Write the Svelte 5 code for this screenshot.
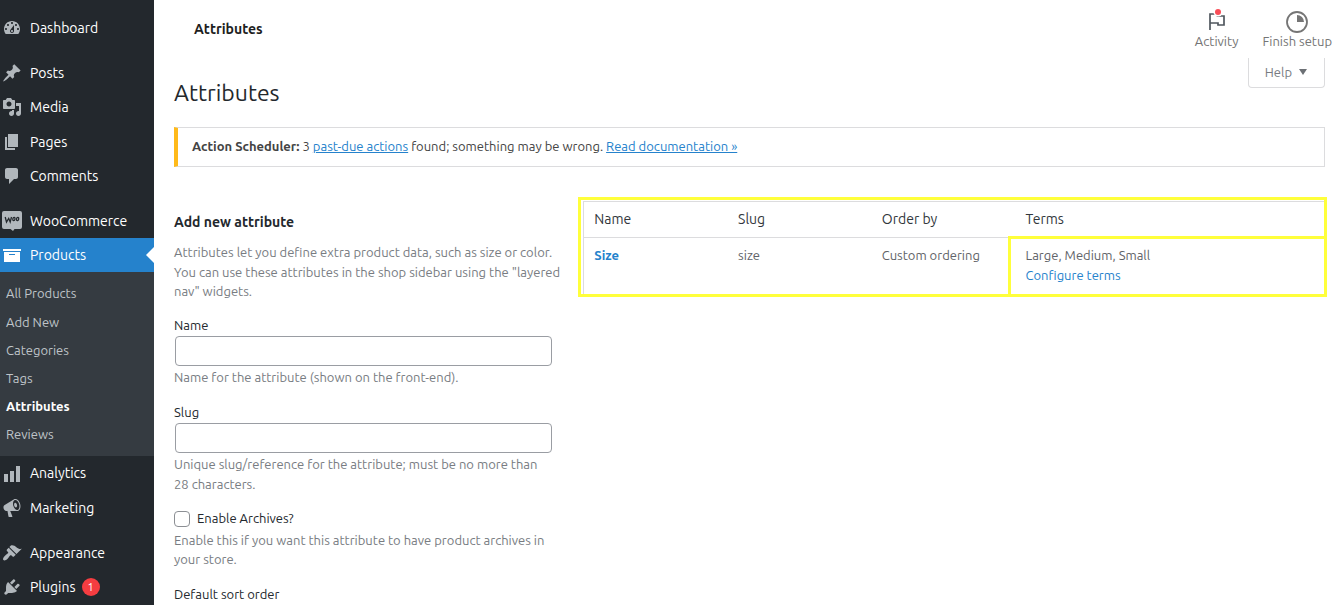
<script>
  const icons = {
    dashboard:
      'M3.76 16h12.48c1.1-1.37 1.76-3.11 1.76-5 0-4.42-3.58-8-8-8s-8 3.58-8 8c0 1.89.66 3.63 1.76 5zM10 4c.55 0 1 .45 1 1s-.45 1-1 1-1-.45-1-1 .45-1 1-1zM6 6c.55 0 1 .45 1 1s-.45 1-1 1-1-.45-1-1 .45-1 1-1zm8 0c.55 0 1 .45 1 1s-.45 1-1 1-1-.45-1-1 .45-1 1-1zm-5.37 5.55L12 7v6c0 1.1-.9 2-2 2s-2-.9-2-2c0-.57.24-1.08.63-1.45zM4 10c.55 0 1 .45 1 1s-.45 1-1 1-1-.45-1-1 .45-1 1-1zm12 0c.55 0 1 .45 1 1s-.45 1-1 1-1-.45-1-1 .45-1 1-1zm-5 3c0-.55-.45-1-1-1s-1 .45-1 1 .45 1 1 1 1-.45 1-1z',
    posts:
      'M10.44 3.02l1.82-1.82 6.36 6.35-1.83 1.82c-1.05-.68-2.48-.57-3.41.36l-.75.75c-.92.93-1.04 2.35-.35 3.41l-1.83 1.82-2.41-2.41-2.8 2.79c-.42.42-3.38 2.71-3.8 2.29s1.86-3.39 2.28-3.81l2.79-2.79L4.1 9.36l1.83-1.82c1.05.69 2.48.57 3.4-.36l.75-.75c.93-.92 1.05-2.35.36-3.41z',
    media:
      'M13 11V4c0-.55-.45-1-1-1h-1.67L9 1H5L3.67 3H2c-.55 0-1 .45-1 1v7c0 .55.45 1 1 1h10c.55 0 1-.45 1-1zM7 4.5c1.38 0 2.5 1.12 2.5 2.5S8.38 9.5 7 9.5 4.5 8.38 4.5 7 5.62 4.5 7 4.5zM14 6h5v10.5c0 1.38-1.12 2.5-2.5 2.5S14 17.88 14 16.5s1.12-2.5 2.5-2.5c.17 0 .34.02.5.05V9h-3V6zm-4 8.05V13h2v3.5c0 1.38-1.12 2.5-2.5 2.5S7 17.88 7 16.5 8.12 14 9.5 14c.17 0 .34.02.5.05z',
    pages: 'M6 15V2h10v13H6zm-1 1h8v2H3V5h2v11z',
    comments:
      'M5 2h9c1.1 0 2 .9 2 2v7c0 1.1-.9 2-2 2h-2l-5 5v-5H5c-1.1 0-2-.9-2-2V4c0-1.1.9-2 2-2z',
    products: 'M19 4v2H1V4h18zM2 7h16v10H2V7zm11 3V9H7v1h6z',
    analytics: 'M18 18V2h-4v16h4zm-6 0V7H8v11h4zm-6 0v-8H2v8h4z',
    marketing:
      'M18.15 5.94c.46 1.62.38 3.22-.02 4.48-.42 1.28-1.26 2.18-2.3 2.48-.16.06-.26.06-.4.06-.06.02-.12.02-.18.02-.06.02-.14.02-.22.02h-6.8l2.22 5.5c.02.14-.06.26-.14.34-.08.1-.24.16-.34.16H6.95c-.1 0-.26-.06-.34-.16-.08-.08-.16-.2-.14-.34l-1-5.5H4.25l-.02-.02c-.5.06-1.08-.18-1.54-.62s-.88-1.08-1.06-1.88c-.24-.8-.2-1.56-.02-2.2.18-.62.58-1.08 1.06-1.3l.02-.02 9-5.4c.1-.06.18-.1.24-.16.06-.04.14-.08.24-.12.16-.08.28-.12.5-.18 1.04-.3 2.24.1 3.22.98s1.84 2.24 2.26 3.86zm-2.58 5.98h-.02c.4-.1.74-.34 1.04-.7.58-.7.86-1.76.86-3.04 0-.64-.1-1.3-.28-1.98-.34-1.36-1.02-2.5-1.78-3.24s-1.68-1.1-2.46-.88c-.82.22-1.4.96-1.7 2-.32 1.04-.28 2.36.06 3.72.38 1.36 1 2.5 1.8 3.24.78.74 1.62 1.1 2.48.88zm-2.54-7.08c.22-.04.42-.02.62.04.38.16.76.48 1.02 1s.42 1.2.42 1.78c0 .3-.04.56-.12.8-.18.48-.44.84-.86.94-.34.1-.8-.06-1.14-.4s-.64-.86-.78-1.5c-.18-.62-.12-1.24.02-1.72s.48-.84.82-.94z',
    appearance:
      'M14.48 11.06L7.41 3.99l1.5-1.5c.5-.56 2.3-.47 3.51.32 1.21.8 1.43 1.28 2.91 2.1 1.18.64 2.45 1.26 4.45.85zm-.71.71L6.7 4.7 4.93 6.47c-.39.39-.39 1.02 0 1.41l1.06 1.06c.39.39.39 1.03 0 1.42-.6.6-1.43 1.11-2.21 1.69-.35.26-.7.53-1.01.84C1.43 14.23.4 16.08 1.4 17.07c.99 1 2.84-.03 4.18-1.36.31-.31.58-.66.85-1.02.57-.78 1.08-1.61 1.69-2.21.39-.39 1.02-.39 1.41 0l1.06 1.06c.39.39 1.02.39 1.41 0z',
    plugins:
      'M13.11 4.36L9.87 7.6 8 5.73l3.24-3.24c.35-.34 1.05-.2 1.56.32.52.51.66 1.21.31 1.55zm-8 1.77l.91-1.12 9.01 9.01-1.19.84c-.71.71-2.63 1.16-3.82 1.16H6.14L4.9 17.26c-.59.59-1.54.59-2.12 0-.59-.58-.59-1.53 0-2.12l1.24-1.24v-3.88c0-1.13.4-3.19 1.09-3.89zm7.26 3.97l3.24-3.24c.34-.35 1.04-.21 1.55.31.52.51.66 1.21.31 1.55l-3.24 3.25z',
  };

  const groups = [
    [{ label: 'Dashboard', icon: 'dashboard' }],
    [
      { label: 'Posts', icon: 'posts' },
      { label: 'Media', icon: 'media' },
      { label: 'Pages', icon: 'pages' },
      { label: 'Comments', icon: 'comments' },
    ],
    [
      { label: 'WooCommerce', icon: 'woo' },
      {
        label: 'Products',
        icon: 'products',
        children: ['All Products', 'Add New', 'Categories', 'Tags', 'Attributes', 'Reviews'],
      },
      { label: 'Analytics', icon: 'analytics' },
      { label: 'Marketing', icon: 'marketing' },
    ],
    [
      { label: 'Appearance', icon: 'appearance' },
      { label: 'Plugins', icon: 'plugins', count: 1 },
    ],
  ];

  let name = $state('');
  let slug = $state('');
  let archives = $state(false);
</script>

<div class="layout">
  <nav class="sidebar" aria-label="Main menu">
    {#each groups as group}
      <ul class="group">
        {#each group as item}
          <li>
            <a class="item" class:current={item.children} href="#top">
              <svg class="icon" viewBox="0 0 20 20" aria-hidden="true">
                {#if item.icon === 'woo'}
                  <path d="M2 0h16q2 0 2 2v14q0 2-2 2h-5.500l-1.500 2-2.500-2H2q-2 0-2-2V2q0-2 2-2z" />
                  <g class="woo-mark">
                    <path d="M3.200 6l1.300 5 2.200-3.600L8.200 11 9.500 6" />
                    <ellipse cx="11.900" cy="8" rx="1.100" ry="1.700" transform="rotate(12 11.900 8)" />
                    <ellipse cx="15.600" cy="8" rx="1.100" ry="1.700" transform="rotate(12 15.600 8)" />
                  </g>
                {:else}
                  <path d={icons[item.icon]} />
                {/if}
              </svg>
              <span>{item.label}</span>
              {#if item.count}<span class="count">{item.count}</span>{/if}
            </a>
            {#if item.children}
              <ul class="submenu">
                {#each item.children as child}
                  <li><a href="#top" class:active={child === 'Attributes'}>{child}</a></li>
                {/each}
              </ul>
            {/if}
          </li>
        {/each}
      </ul>
    {/each}
  </nav>

  <div class="page" id="top">
    <header class="topbar">
      <div class="crumb">Attributes</div>
      <div class="tabs">
        <button type="button">
          <svg width="24" height="24" viewBox="0 0 24 24" aria-hidden="true">
            <path d="M5 21V5h7.500v2H19v9h-6v-2H5" fill="none" stroke="#50575e" stroke-width="1.700" />
            <circle cx="13" cy="3" r="4.500" fill="#fff" />
            <circle cx="13" cy="3" r="3" fill="#f94d57" />
          </svg>
          Activity
        </button>
        <button type="button">
          <svg width="24" height="24" viewBox="0 0 24 24" aria-hidden="true">
            <circle cx="12" cy="13" r="10" fill="none" stroke="#757575" stroke-width="1.800" />
            <path d="M12 13V6a7 7 0 0 1 7 7z" fill="#757575" />
          </svg>
          Finish setup
        </button>
      </div>
    </header>

    <main>
      <div class="heading">
        <h1>Attributes</h1>
        <button type="button" class="help">Help
          <svg width="10" height="8" viewBox="0 0 10 8" aria-hidden="true"><path d="M1 1h8L5 7z" /></svg>
        </button>
      </div>

      <div class="notice">
        <strong>Action Scheduler:</strong> 3 <a href="#top">past-due actions</a> found; something may be wrong. <a href="#top">Read documentation »</a>
      </div>

      <div class="columns">
        <form>
          <h2>Add new attribute</h2>
          <p class="intro">Attributes let you define extra product data, such as size or color. You can use these attributes in the shop sidebar using the "layered nav" widgets.</p>

          <div class="fields">
            <div>
              <label for="name">Name</label>
              <input id="name" type="text" bind:value={name} />
              <p>Name for the attribute (shown on the front-end).</p>
            </div>
            <div>
              <label for="slug">Slug</label>
              <input id="slug" type="text" bind:value={slug} />
              <p>Unique slug/reference for the attribute; must be no more than 28 characters.</p>
            </div>
            <div>
              <label class="check"><input type="checkbox" bind:checked={archives} />Enable Archives?</label>
              <p>Enable this if you want this attribute to have product archives in your store.</p>
            </div>
            <div class="sort">Default sort order</div>
          </div>
        </form>

        <div class="listing">
          <table>
            <thead>
              <tr><th>Name</th><th>Slug</th><th>Order by</th><th class="wide">Terms</th></tr>
            </thead>
            <tbody>
              <tr>
                <td><a class="strong" href="#top">Size</a></td>
                <td>size</td>
                <td>Custom ordering</td>
                <td class="terms">Large, Medium, Small<br /><a href="#top">Configure terms</a></td>
              </tr>
            </tbody>
          </table>
        </div>
      </div>
    </main>
  </div>
</div>

<style>
  :global(body) {
    background: #fff;
    color: #50575e;
    font: 13px/1.5 Ubuntu, 'Noto Sans', sans-serif;
  }
  .layout {
    display: flex;
    min-height: 100vh;
  }
  ul,
  p,
  h1,
  h2 {
    margin: 0;
    padding: 0;
    list-style: none;
  }
  a {
    color: #2582cc;
  }
  button {
    font: inherit;
    color: #757575;
    background: none;
    border: 0;
    padding: 0;
  }

  .sidebar {
    flex: 0 0 154px;
    height: 100vh;
    overflow: hidden;
    background: #23282d;
  }
  .group {
    margin-top: 11px;
  }
  .item {
    position: relative;
    display: flex;
    align-items: center;
    gap: 8px;
    padding: 8px 0 8px 2px;
    font-size: 14px;
    line-height: 1.3;
    color: #fff;
    text-decoration: none;
  }
  .icon {
    flex: none;
    width: 20px;
    height: 20px;
    margin: -1px 0;
    fill: #b1b7bc;
    overflow: visible;
  }
  .woo-mark {
    fill: none;
    stroke: #23282d;
    stroke-width: 1.3;
  }
  .current {
    background: #2582cc;
  }
  .current .icon {
    fill: #fff;
  }
  .current::after {
    content: '';
    position: absolute;
    right: 0;
    top: 9px;
    border: 8px solid transparent;
    border-left: 0;
    border-right-color: #fff;
  }
  .count {
    width: 18px;
    height: 18px;
    margin: 0 0 0 -2px;
    border-radius: 9px;
    background: #f53d41;
    font-size: 11px;
    line-height: 18px;
    text-align: center;
  }
  .submenu {
    padding: 7px 0 8px;
    background: #353b41;
  }
  .submenu a {
    display: block;
    padding: 5px 6px;
    font-size: 13px;
    line-height: 1.4;
    color: #bfc4c8;
    text-decoration: none;
  }
  .submenu .active {
    color: #fff;
    font-weight: 700;
  }

  .page {
    flex: 1;
    min-width: 0;
  }
  .topbar {
    display: flex;
    justify-content: space-between;
    align-items: center;
    height: 58px;
    padding-left: 40px;
  }
  .crumb {
    font-size: 14px;
    font-weight: 600;
    color: #1e1e1e;
  }
  .tabs {
    display: flex;
    gap: 24px;
    padding-right: 12px;
  }
  .tabs button {
    display: flex;
    flex-direction: column;
    align-items: center;
    line-height: 16px;
  }
  .tabs svg {
    overflow: visible;
  }

  main {
    padding: 0 19px 0 20px;
  }
  .heading {
    display: flex;
    justify-content: space-between;
    align-items: flex-start;
  }
  h1 {
    padding-top: 20px;
    font-size: 23px;
    line-height: 29px;
    font-weight: 400;
    color: #23282d;
  }
  .help {
    display: flex;
    align-items: center;
    gap: 6px;
    padding: 4px 16px 5px;
    border: 1px solid #dcdcde;
    border-top: 0;
    border-radius: 0 0 4px 4px;
    line-height: 20px;
    color: #787c82;
  }
  .help svg {
    fill: #6c7075;
  }
  .notice {
    margin-top: 20px;
    padding: 8px 14px 10px;
    border: 1px solid #dcdcde;
    border-left: 4px solid #ffba1a;
    line-height: 20px;
    color: #444;
  }
  .notice strong {
    font-weight: 600;
  }

  .columns {
    display: grid;
    grid-template-columns: 35fr 65fr;
    gap: 10px;
    margin-top: 34px;
  }
  h2 {
    margin-top: 11px;
    font-size: 14px;
    line-height: 20px;
    font-weight: 600;
    color: #23282d;
  }
  p {
    color: #787c82;
  }
  .intro {
    margin: 11px 0 14px;
  }
  .fields {
    display: grid;
    gap: 15px;
    padding-right: 22px;
  }
  label,
  .sort {
    display: block;
    color: #23282d;
  }
  input[type='text'] {
    display: block;
    box-sizing: border-box;
    width: 100%;
    height: 30px;
    margin: 1px 1px 2px;
    padding: 0 8px;
    border: 1px solid #9a9da3;
    border-radius: 4px;
  }
  .check {
    display: flex;
    align-items: center;
    gap: 7px;
    margin-bottom: 2px;
  }
  input[type='checkbox'] {
    appearance: none;
    width: 16px;
    height: 16px;
    margin: 0;
    border: 1px solid #8c8f94;
    border-radius: 4px;
    background: #fff;
  }

  .listing {
    position: relative;
    align-self: start;
  }
  /* Marker frame round the whole list */
  .listing::after {
    content: '';
    position: absolute;
    inset: -4px -2px -2px -5px;
    border: 3px solid #ffff3b;
  }
  table {
    width: 100%;
    table-layout: fixed;
    border: 1px solid #dcdcde;
    border-bottom: 0;
    border-spacing: 0;
  }
  th,
  td {
    padding: 8px 10px;
    text-align: left;
    vertical-align: top;
    font-weight: 400;
  }
  th {
    padding: 7px 10px;
    border-bottom: 1px solid #dcdcde;
    font-size: 14px;
    color: #32373c;
  }
  .wide {
    width: 39%;
  }
  td {
    height: 41px;
    color: #5f6368;
  }
  td a {
    text-decoration: none;
  }
  .strong {
    font-weight: 600;
  }
  .terms {
    position: relative;
  }
  /* Marker frame round the terms cell */
  .terms::after {
    content: '';
    position: absolute;
    inset: -2px -3px -2px -8px;
    border: 3px solid #ffff3b;
  }
</style>
